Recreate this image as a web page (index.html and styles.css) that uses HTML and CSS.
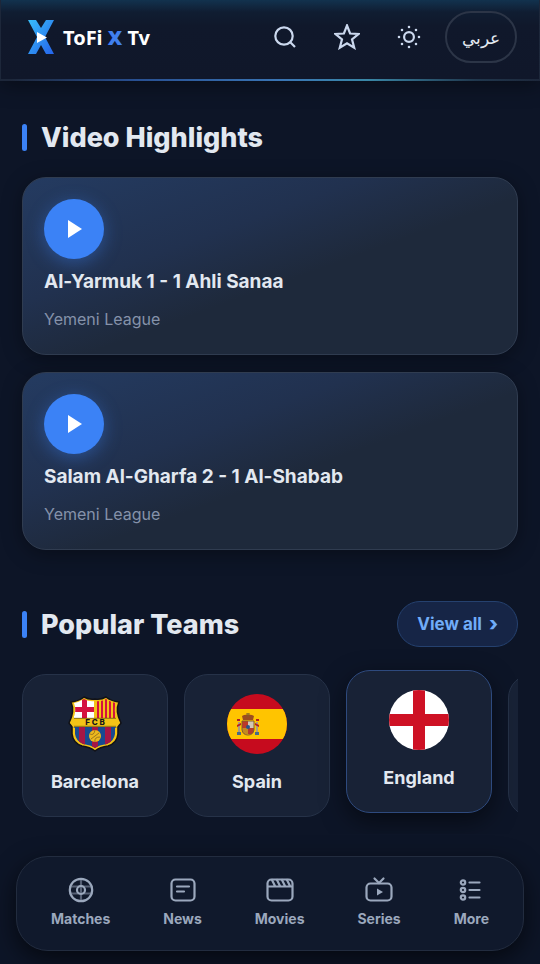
FILE: index.html
```
<!DOCTYPE html>
<html lang="en">
<head>
  <meta charset="UTF-8" />
  <meta name="viewport" content="width=device-width, initial-scale=1.0"/>
  <title>ToFi X Tv</title>
  <link rel="stylesheet" href="styles.css">
</head>
<body>

  <header class="topbar">
    <a class="brand" href="#">
      <svg class="brand-mark" width="28" height="36" viewBox="0 0 28 36" aria-hidden="true">
        <defs>
          <linearGradient id="logoFill" x1="0" y1="0" x2="1" y2="1">
            <stop offset="0" stop-color="#38bdf8"/>
            <stop offset="1" stop-color="#2563eb"/>
          </linearGradient>
        </defs>
        <path fill="url(#logoFill)" d="M1 1H9L14 9L19 1H27L18 18L27 35H19L14 26L9 35H1L10 18Z"/>
        <path fill="#fff" d="M10 13L20 18.5L10 24Z"/>
      </svg>
      <span>ToFi <b>X</b> Tv</span>
    </a>
    <div class="actions">
      <button class="icon-btn" aria-label="Search">
        <svg width="26" height="26" viewBox="0 0 26 26"><circle cx="12" cy="12" r="8.7"/><path d="M18.3 18.3L23 23"/></svg>
      </button>
      <button class="icon-btn" aria-label="Favourites">
        <svg width="26" height="26" viewBox="0 0 26 26"><path d="M13 1.5L16.1 9.5L24.5 10L18 15.4L20.2 23.7L13 19.2L5.8 23.7L8 15.4L1.5 10L9.9 9.5Z"/></svg>
      </button>
      <button class="icon-btn" aria-label="Theme">
        <svg width="26" height="26" viewBox="0 0 26 26"><circle cx="13" cy="13" r="4.9"/><path class="rays" d="M13 3h.01M13 23h.01M3 13h.01M23 13h.01M6 6h.01M20 6h.01M6 20h.01M20 20h.01"/></svg>
      </button>
      <button class="lang-btn" lang="ar">عربي</button>
    </div>
  </header>

  <main>
    <section class="highlights">
      <div class="section-head">
        <h2>Video Highlights</h2>
      </div>
      <article class="video-card">
        <button class="play" aria-label="Play"><svg width="14" height="18" viewBox="0 0 14 18"><path d="M0 0L14 9L0 18Z"/></svg></button>
        <h3>Al-Yarmuk 1 - 1 Ahli Sanaa</h3>
        <p>Yemeni League</p>
      </article>
      <article class="video-card">
        <button class="play" aria-label="Play"><svg width="14" height="18" viewBox="0 0 14 18"><path d="M0 0L14 9L0 18Z"/></svg></button>
        <h3>Salam Al-Gharfa 2 - 1 Al-Shabab</h3>
        <p>Yemeni League</p>
      </article>
    </section>

    <section class="teams">
      <div class="section-head">
        <h2>Popular Teams</h2>
        <a class="view-all" href="#">View all <span>›</span></a>
      </div>
      <div class="team-row">
        <a class="team" href="#">
          <svg width="60" height="60" viewBox="0 0 60 60" aria-hidden="true">
            <defs>
              <clipPath id="crest"><path d="M9 9Q14 8 19 5Q24 8 30 7Q36 8 41 5Q45 8 51 9Q48 17 52 25L52 33L50 34V40Q49 47 42 50Q34 51 30 54Q26 51 18 50Q11 47 10 40V34L8 33V25Q12 17 9 9Z"/></clipPath>
            </defs>
            <path fill="#f3c316" stroke="#111218" stroke-width="1.6" stroke-linejoin="round" d="M6 8Q14 7 19 3Q24 6 30 5Q36 6 41 3Q46 7 54 8Q50 17 56 29L53 33V40Q52 49 43 52Q35 53 30 57Q25 53 17 52Q8 49 7 40V33L4 29Q10 17 6 8Z"/>
            <g clip-path="url(#crest)">
              <path fill="#fff" d="M9 6H29V25H9Z"/>
              <path fill="#d4123f" d="M17 4H22V25H17ZM9 13H29V18H9Z"/>
              <path fill="#f3c316" d="M30 4H52V25H30Z"/>
              <path stroke="#d4123f" stroke-width="2" d="M33 4V24M37 4V24M41 4V24M45 4V24M49 4V24"/>
              <path fill="#174a91" d="M8 33H52V55H8Z"/>
              <path fill="#a51645" d="M14 33H20V55H14ZM27 33H33V55H27ZM40 33H46V55H40Z"/>
            </g>
            <path fill="#f3c316" d="M8 24H52L55 29L51 32H9L5 29Z"/>
            <path stroke="#3b3216" stroke-width="0.6" d="M9 24.3H51M9 32.3H51"/>
            <circle cx="30" cy="42" r="6" fill="#edb91d"/>
            <path fill="none" stroke="#7d5a20" stroke-width="0.7" d="M25 40Q29 42 30 36M30 48Q29 43 35 43M26 45L30 42L34 39"/>
            <text x="30" y="31" text-anchor="middle" class="crest-text">F C B</text>
          </svg>
          <span>Barcelona</span>
        </a>
        <a class="team" href="#">
          <svg width="60" height="60" viewBox="0 0 60 60" aria-hidden="true">
            <clipPath id="disc"><circle cx="30" cy="30" r="30"/></clipPath>
            <g clip-path="url(#disc)">
              <path fill="#c60b1e" d="M0 0H60V60H0Z"/>
              <path fill="#ffc400" d="M0 15H60V45H0Z"/>
            </g>
            <path fill="#a99d83" d="M11 28H13V38H11ZM29 28H31V38H29Z"/>
            <path fill="#b41d25" d="M10 25H13V27H10ZM29 25H32V27H29ZM10 31L14 29V31L10 33ZM28 29L32 31V33L28 31Z"/>
            <path fill="#496a86" d="M10 38H14V41H10ZM28 38H32V41H28Z"/>
            <path fill="#bd3928" d="M15 27H21V34H15Z"/>
            <path fill="#d2c6b5" d="M21 27H27V34H21Z"/>
            <path fill="#c48a20" d="M15 34H21V40Q15 41 15 36Z"/>
            <path fill="#b43a2d" d="M21 34H27V36Q27 41 21 40Z"/>
            <circle cx="21" cy="33" r="2" fill="#29548a"/>
            <path fill="#9c4d20" d="M16 26L15 22Q18 20 21 21Q24 20 27 22L26 26Z"/>
            <path fill="none" stroke="#81602b" stroke-width="1" d="M21 19V23M19 20H23M15 27V36Q16 41 21 41Q26 41 27 36V27Z"/>
          </svg>
          <span>Spain</span>
        </a>
        <a class="team active" href="#">
          <svg width="60" height="60" viewBox="0 0 60 60" aria-hidden="true">
            <g clip-path="url(#disc)">
              <path fill="#fff" d="M0 0H60V60H0Z"/>
              <path fill="#ce1124" d="M24 0H36V60H24ZM0 24H60V36H0Z"/>
            </g>
          </svg>
          <span>England</span>
        </a>
        <a class="team" href="#" aria-label="Next team"></a>
      </div>
    </section>
  </main>

  <nav class="bottom-nav">
    <a href="#">
      <svg width="28" height="28" viewBox="0 0 28 28"><path class="faint" d="M14 3V25M3 10.5H25M3 17.5H25"/><circle cx="14" cy="14" r="11.2"/><circle cx="14" cy="14" r="4"/></svg>
      Matches
    </a>
    <a href="#">
      <svg width="28" height="28" viewBox="0 0 28 28"><rect x="2.5" y="3.5" width="23" height="21" rx="4"/><path d="M8 10.5H20M8 15.5H15"/></svg>
      News
    </a>
    <a href="#">
      <svg width="28" height="28" viewBox="0 0 28 28"><rect x="1.5" y="3.5" width="25" height="21" rx="4"/><path d="M2 10.5H26M6 4L9 10M11 4L14 10M16 4L19 10M21 4L24 10"/></svg>
      Movies
    </a>
    <a href="#">
      <svg width="28" height="28" viewBox="0 0 28 28"><rect x="1.5" y="7.5" width="25" height="17" rx="4"/><path d="M9.5 2.5L14 7L18.5 2.5"/><path class="solid" d="M12 12.5L18 16L12 19.5Z"/></svg>
      Series
    </a>
    <a href="#">
      <svg width="28" height="28" viewBox="0 0 28 28"><circle cx="6" cy="6.5" r="2.2"/><circle cx="6" cy="14" r="2.2"/><circle cx="6" cy="21.5" r="2.2"/><path d="M12.5 6.5H22.5M12.5 14H22.5M12.5 21.5H22.5"/></svg>
      More
    </a>
  </nav>

</body>
</html>
```
FILE: styles.css
```
* {
  box-sizing: border-box;
}

body {
  margin: 0;
  min-height: 100vh;
  display: flex;
  flex-direction: column;
  font-family: Inter, "Noto Sans", sans-serif;
  color: #e2e8f0;
  background: #0d1527;
}

h2, h3, p {
  margin: 0;
}

a {
  color: inherit;
  text-decoration: none;
}

button {
  font: inherit;
  color: inherit;
  border: 0;
  padding: 0;
  background: none;
  cursor: pointer;
}

svg {
  display: block;
  flex: none;
}

/* top bar */
.topbar {
  display: flex;
  align-items: flex-start;
  justify-content: space-between;
  height: 81px;
  padding: 11px 22px 0 26px;
  border: 1px solid #1d273a;
  border-top: 0;
  border-bottom: 2px solid;
  border-image: linear-gradient(90deg, #1d273a 2%, #284f91 25%, #3a75b4 52%, #3a87a6 68%, #20374d 88%, #1d273a) 1;
  background: linear-gradient(#12324e, #101d32 12px, #10182b 26px, #10172a);
  box-shadow: 0 4px 20px rgba(0, 0, 0, 0.4);
}

.brand {
  display: flex;
  align-items: center;
  gap: 8px;
  height: 52px;
  font-family: "Noto Sans", sans-serif;
  font-size: 20px;
  font-weight: 700;
  color: #fff;
}

.brand b {
  color: #4080ee;
}

.actions {
  display: flex;
  align-items: center;
}

.icon-btn {
  display: grid;
  place-items: center;
  width: 62px;
  height: 52px;
}

.icon-btn svg {
  fill: none;
  stroke: #cbd8ee;
  stroke-width: 2.2;
}

.icon-btn .rays {
  stroke-width: 2.6;
  stroke-linecap: round;
}

.lang-btn {
  width: 72px;
  height: 52px;
  margin-left: 5px;
  border: 2px solid #2c3547;
  border-radius: 26px;
  font-family: "Noto Sans", sans-serif;
  font-size: 17px;
  font-weight: 400;
}

/* sections */
main {
  padding: 36px 22px 0;
}

.section-head {
  display: flex;
  align-items: center;
  justify-content: space-between;
  height: 40px;
}

.section-head h2 {
  display: flex;
  align-items: center;
  gap: 14px;
  font-size: 27px;
  font-weight: 800;
}

.section-head h2::before {
  content: "";
  width: 5px;
  height: 27px;
  border-radius: 3px;
  background: #3b82f6;
}

/* video cards */
.video-card {
  margin-top: 17px;
  padding: 21px 21px 22px;
  border: 1px solid #303c50;
  border-radius: 24px;
  background: linear-gradient(160deg, #243b61, #21314f 35%, #1e293b 56%);
  box-shadow: 0 4px 20px rgba(0, 0, 0, 0.35);
}

.section-head + .video-card {
  margin-top: 20px;
}

.play {
  display: grid;
  place-items: center;
  width: 60px;
  height: 60px;
  border-radius: 50%;
  background: #3b82f6;
  box-shadow: 0 4px 18px rgba(59, 130, 246, 0.4);
}

.play svg {
  margin-left: 2px;
  fill: #fff;
}

.video-card h3 {
  margin-top: 9px;
  font-size: 19px;
  font-weight: 700;
  line-height: 28px;
}

.video-card p {
  margin-top: 10px;
  font-size: 16px;
  line-height: 26px;
  color: #8592aa;
}

/* teams */
.teams {
  margin-top: 51px;
}

.teams .section-head {
  height: 46px;
}

.view-all {
  display: flex;
  align-items: center;
  gap: 7px;
  height: 46px;
  padding: 0 19px;
  border: 1px solid #25416f;
  border-radius: 23px;
  font-size: 17px;
  font-weight: 700;
  color: #70acf8;
  background: #162546;
}

.view-all span {
  font-size: 20px;
  font-weight: 800;
}

.team-row {
  display: flex;
  gap: 16px;
  padding: 27px 0 17px;
  overflow: hidden;
}

.team {
  flex: none;
  display: flex;
  flex-direction: column;
  align-items: center;
  gap: 14px;
  width: 146px;
  height: 143px;
  padding-top: 19px;
  border: 1px solid #263248;
  border-radius: 24px;
  font-size: 18px;
  font-weight: 700;
  line-height: 28px;
  background: #182236;
}

.team.active {
  transform: translateY(-4px);
  border-color: #2e4a7e;
  box-shadow: 0 8px 24px rgba(0, 0, 0, 0.5);
}

.crest-text {
  font-family: Inter, sans-serif;
  font-size: 8px;
  font-weight: 800;
  fill: #17171a;
}

/* bottom nav */
.bottom-nav {
  position: sticky;
  bottom: 13px;
  display: flex;
  justify-content: space-between;
  margin: auto 16px 13px;
  padding: 19px 34px 20px;
  border: 1px solid #222c3f;
  border-radius: 32px;
  background: #10192c;
  box-shadow: 0 8px 24px rgba(0, 0, 0, 0.6);
}

.bottom-nav a {
  display: flex;
  flex-direction: column;
  align-items: center;
  gap: 4px;
  font-size: 14px;
  font-weight: 700;
  line-height: 22px;
  color: #9ba8bd;
}

.bottom-nav svg {
  fill: none;
  stroke: #9ba8bd;
  stroke-width: 2.2;
  stroke-linecap: round;
}

.bottom-nav .faint {
  opacity: 0.5;
}

.bottom-nav .solid {
  fill: #9ba8bd;
  stroke: none;
}
```
